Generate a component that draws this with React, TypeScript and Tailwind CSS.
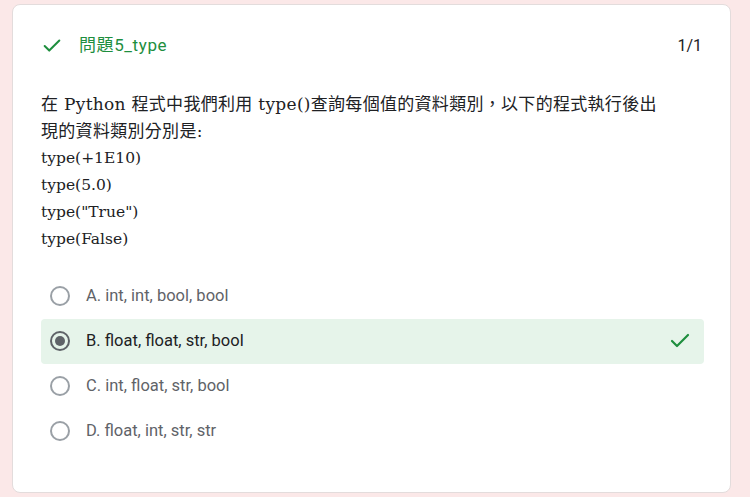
import { Check } from 'lucide-react';

const options = [
  { label: 'A. int, int, bool, bool', picked: false },
  { label: 'B. float, float, str, bool', picked: true },
  { label: 'C. int, float, str, bool', picked: false },
  { label: 'D. float, int, str, str', picked: false },
];

const codeLines = ['type(+1E10)', 'type(5.0)', 'type("True")', 'type(False)'];

function Radio({ checked }: { checked: boolean }) {
  return (
    <span
      className={`flex h-5 w-5 shrink-0 items-center justify-center rounded-full border-2 ${
        checked ? 'border-[#5f6368]' : 'border-[#9aa0a6]'
      }`}
    >
      {checked && <span className="h-2.5 w-2.5 rounded-full bg-[#5f6368]" />}
    </span>
  );
}

export default function App() {
  return (
    <div className="min-h-[497px] bg-[#fbe8e8] pl-3 pt-1 pb-1 font-['Roboto','Noto_Sans_CJK_TC',sans-serif]">
      <div className="h-[489px] w-[719px] rounded-lg border border-[#e3dcdc] bg-white pl-7 pr-[26px] pt-7">
        <div className="flex items-center justify-between pr-0.5">
          <div className="flex items-center gap-4">
            <Check size={22} strokeWidth={2.2} className="text-[#1e8e3e]" />
            <span className="text-[17px] tracking-[0.6px] text-[#1e8e3e]">問題5_type</span>
          </div>
          <span className="text-[16px] text-[#202124]">1/1</span>
        </div>

        <div className="mt-[32px] font-['DejaVu_Serif','Noto_Sans_CJK_TC',serif] text-[#202124]">
          <p className="text-[17px] leading-[27px] tracking-[0.3px]">
            在 Python 程式中我們利用 type()查詢每個值的資料類別，以下的程式執行後出
            <br />
            現的資料類別分別是:
          </p>
          {codeLines.map((line) => (
            <p key={line} className="text-[15.5px] leading-[27px]">
              {line}
            </p>
          ))}
        </div>

        <div className="mt-[21px] flex flex-col">
          {options.map((opt) => (
            <div
              key={opt.label}
              className={`flex h-[45px] items-center rounded pl-[9px] pr-3 ${
                opt.picked ? 'bg-[#e6f4ea]' : ''
              }`}
            >
              <Radio checked={opt.picked} />
              <span
                className={`ml-4 text-[16.5px] ${
                  opt.picked ? 'text-[#202124]' : 'text-[#5f6368]'
                }`}
              >
                {opt.label}
              </span>
              {opt.picked && (
                <Check size={24} strokeWidth={2.2} className="ml-auto text-[#1e8e3e]" />
              )}
            </div>
          ))}
        </div>
      </div>
    </div>
  );
}
